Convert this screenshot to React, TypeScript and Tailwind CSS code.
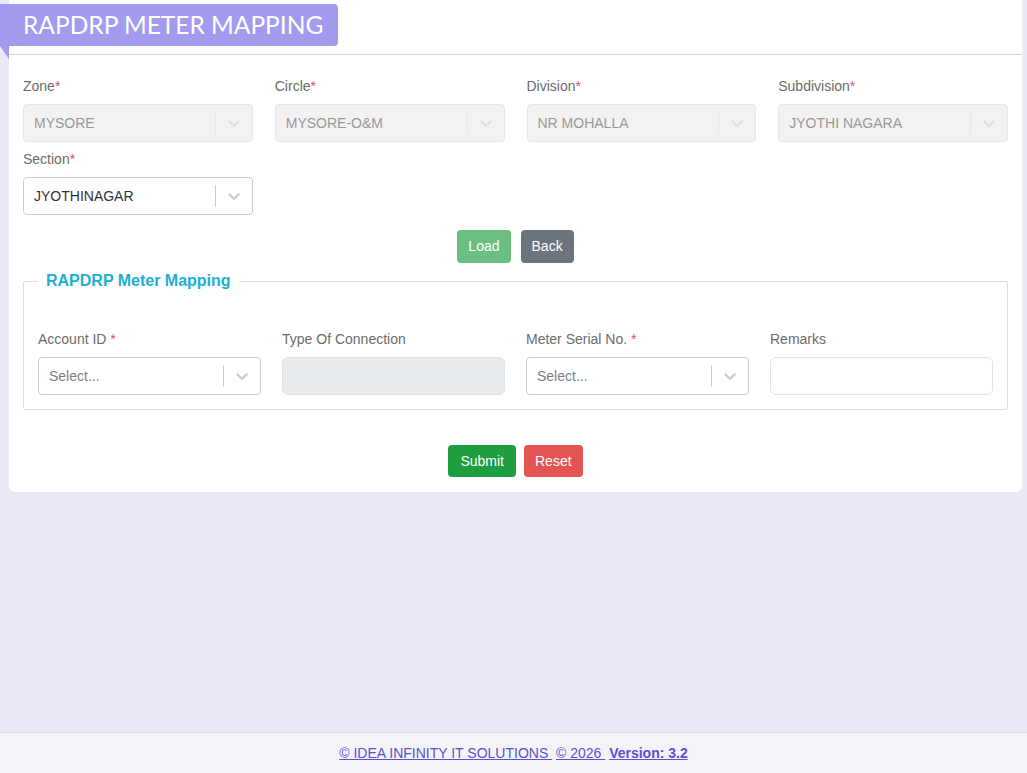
import React from 'react';

const Chevron = () => (
  <svg height="20" width="20" viewBox="0 0 20 20" aria-hidden="true" className="fill-current">
    <path d="M4.516 7.548c0.436-0.446 1.043-0.481 1.576 0l3.908 3.747 3.908-3.747c0.533-0.481 1.141-0.446 1.574 0 0.436 0.445 0.408 1.197 0 1.615-0.406 0.418-4.695 4.502-4.695 4.502-0.217 0.223-0.502 0.335-0.787 0.335s-0.57-0.112-0.789-0.335c0 0-4.287-4.084-4.695-4.502s-0.436-1.17 0-1.615z" />
  </svg>
);

type SelectProps = { value?: string; placeholder?: string; disabled?: boolean };

function SelectBox({ value, placeholder, disabled }: SelectProps) {
  return (
    <div
      className={`flex h-[38px] items-center rounded-[4px] border ${
        disabled ? 'border-[#e6e6e6] bg-[#f2f2f2]' : 'border-[#cccccc] bg-white'
      }`}
    >
      <div
        className={`flex-1 truncate pl-[10px] text-[14px] ${
          disabled ? 'text-[#999999]' : value ? 'text-[#333333]' : 'text-[#808080]'
        }`}
      >
        {value || placeholder}
      </div>
      <span className={`h-[22px] w-px ${disabled ? 'bg-[#e6e6e6]' : 'bg-[#cccccc]'}`} />
      <div className={`px-2 ${disabled ? 'text-[#e0e0e0]' : 'text-[#cccccc]'}`}>
        <Chevron />
      </div>
    </div>
  );
}

function Label({ text, star, spaced }: { text: string; star?: boolean; spaced?: boolean }) {
  return (
    <label className="mb-2 block text-[14px] leading-5 text-[#6c6c6c]">
      {text}
      {star && <span className="text-[#e05260]">{spaced ? ' *' : '*'}</span>}
    </label>
  );
}

const topFields = [
  { label: 'Zone', value: 'MYSORE' },
  { label: 'Circle', value: 'MYSORE-O&M' },
  { label: 'Division', value: 'NR MOHALLA' },
  { label: 'Subdivision', value: 'JYOTHI NAGARA' },
];

export default function App() {
  return (
    <div
      className="flex min-h-screen flex-col bg-[#e9eaf6]"
      style={{ fontFamily: '"Liberation Sans", Arial, sans-serif' }}
    >
      <main className="flex-1">
        <div className="ml-[9px] mr-[5px] rounded-b-[6px] bg-white pb-[15px]">
          {/* header */}
          <div className="relative border-b border-[#d4d4d4] pb-[8px] pt-[4px]">
            <div
              className="-ml-[9px] inline-flex h-[42px] items-center rounded-r-[4px] bg-[#a39cee] pl-[23px] pr-[15px] text-[24.5px] text-white"
              style={{ fontFamily: 'Lato, "Liberation Sans", sans-serif' }}
            >
              RAPDRP METER MAPPING
            </div>
            <svg className="absolute -left-[9px] top-[46px]" width="9" height="13" viewBox="0 0 9 13">
              <polygon points="0,0 9,0 9,13" fill="#a39cee" />
            </svg>
          </div>

          {/* filters */}
          <div className="px-[14px] pt-[21px]">
            <div className="grid grid-cols-4 gap-x-[22px] gap-y-[7px]">
              {topFields.map((f) => (
                <div key={f.label}>
                  <Label text={f.label} star />
                  <SelectBox value={f.value} disabled />
                </div>
              ))}
              <div>
                <Label text="Section" star />
                <SelectBox value="JYOTHINAGAR" />
              </div>
            </div>

            <div className="mt-[15px] flex justify-center gap-[10px]">
              <button className="h-[33px] rounded-[4px] bg-[#6bbf83] px-[11px] text-[14px] text-white">
                Load
              </button>
              <button className="h-[33px] rounded-[4px] bg-[#6c757d] px-[11px] text-[14px] text-white">
                Back
              </button>
            </div>

            <fieldset className="mt-[6px] rounded-[2px] border border-[#dddddd] px-[14px] pb-[14px] pt-[36px]">
              <legend className="px-[8px] text-[16px] font-bold text-[#1cb0d6]">
                RAPDRP Meter Mapping
              </legend>
              <div className="grid grid-cols-4 gap-x-[21px]">
                <div>
                  <Label text="Account ID" star spaced />
                  <SelectBox placeholder="Select..." />
                </div>
                <div>
                  <Label text="Type Of Connection" />
                  <div className="h-[38px] rounded-[6px] border border-[#dee2e6] bg-[#e9ecef]" />
                </div>
                <div>
                  <Label text="Meter Serial No." star spaced />
                  <SelectBox placeholder="Select..." />
                </div>
                <div>
                  <Label text="Remarks" />
                  <input className="h-[38px] w-full rounded-[6px] border border-[#dee2e6] bg-white px-3 text-[14px] outline-none" />
                </div>
              </div>
            </fieldset>

            <div className="mt-[35px] flex justify-center gap-[8px]">
              <button className="h-[32px] rounded-[4px] bg-[#1e9e3f] px-[12px] text-[14px] text-white">
                Submit
              </button>
              <button className="h-[32px] rounded-[4px] bg-[#e55454] px-[11px] text-[14px] text-white">
                Reset
              </button>
            </div>
          </div>
        </div>
      </main>

      <footer className="flex h-[41px] items-center justify-center border-t border-[#dcdfe8] bg-[#f3f4f8] text-[14px] text-[#5b4fd3]">
        <a className="underline">© IDEA INFINITY IT SOLUTIONS&nbsp;</a>
        <span>&nbsp;</span>
        <a className="underline">© 2026&nbsp;</a>
        <span>&nbsp;</span>
        <a className="font-bold underline">Version: 3.2</a>
      </footer>
    </div>
  );
}
